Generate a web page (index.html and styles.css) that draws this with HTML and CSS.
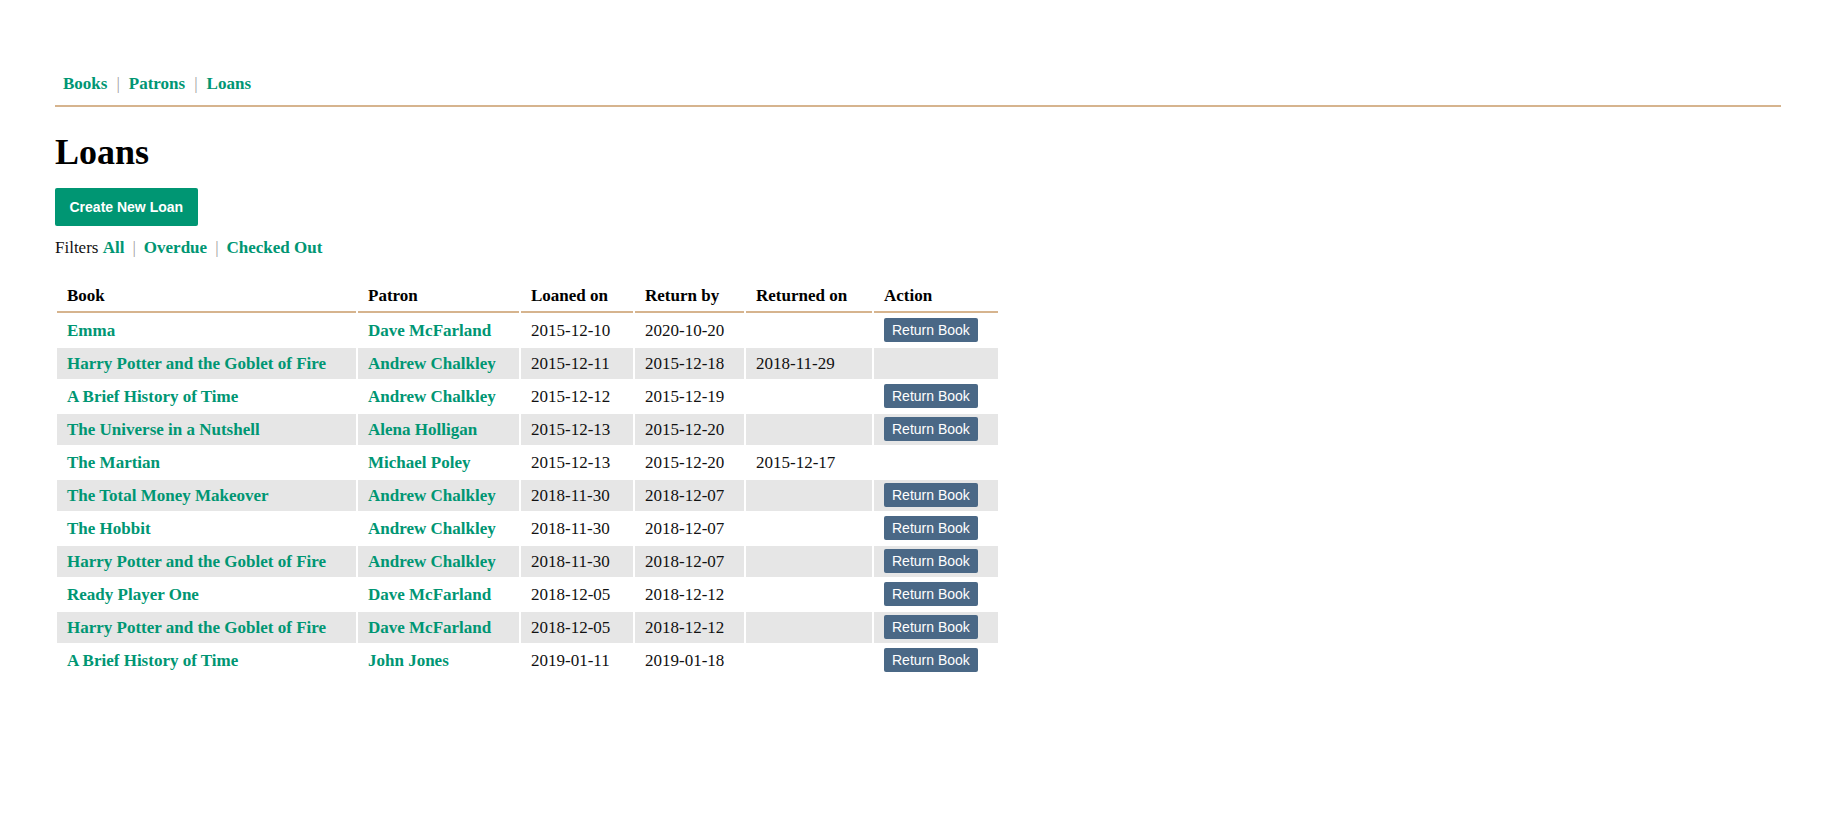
FILE: index.html
```html
<!DOCTYPE html>
<html lang="en">
<head>
<meta charset="utf-8">
<title>Loans</title>
<link rel="stylesheet" href="styles.css">
</head>
<body>
<div class="page">
  <nav class="nav">
    <a href="#">Books</a><span class="sep">|</span><a href="#">Patrons</a><span class="sep">|</span><a href="#">Loans</a>
  </nav>
  <h1 class="title">Loans</h1>
  <a class="btn-primary" href="#">Create New Loan</a>
  <p class="filters">Filters <a href="#">All</a><span class="sep">|</span><a href="#">Overdue</a><span class="sep">|</span><a href="#">Checked Out</a></p>
  <table class="loans">
    <thead>
      <tr>
        <th class="c-book">Book</th>
        <th class="c-patron">Patron</th>
        <th class="c-loaned">Loaned on</th>
        <th class="c-return">Return by</th>
        <th class="c-returned">Returned on</th>
        <th class="c-action">Action</th>
      </tr>
    </thead>
    <tbody>
      <tr><td><a href="#">Emma</a></td><td><a href="#">Dave McFarland</a></td><td>2015-12-10</td><td>2020-10-20</td><td></td><td><a class="btn-return" href="#">Return Book</a></td></tr>
      <tr><td><a href="#">Harry Potter and the Goblet of Fire</a></td><td><a href="#">Andrew Chalkley</a></td><td>2015-12-11</td><td>2015-12-18</td><td>2018-11-29</td><td></td></tr>
      <tr><td><a href="#">A Brief History of Time</a></td><td><a href="#">Andrew Chalkley</a></td><td>2015-12-12</td><td>2015-12-19</td><td></td><td><a class="btn-return" href="#">Return Book</a></td></tr>
      <tr><td><a href="#">The Universe in a Nutshell</a></td><td><a href="#">Alena Holligan</a></td><td>2015-12-13</td><td>2015-12-20</td><td></td><td><a class="btn-return" href="#">Return Book</a></td></tr>
      <tr><td><a href="#">The Martian</a></td><td><a href="#">Michael Poley</a></td><td>2015-12-13</td><td>2015-12-20</td><td>2015-12-17</td><td></td></tr>
      <tr><td><a href="#">The Total Money Makeover</a></td><td><a href="#">Andrew Chalkley</a></td><td>2018-11-30</td><td>2018-12-07</td><td></td><td><a class="btn-return" href="#">Return Book</a></td></tr>
      <tr><td><a href="#">The Hobbit</a></td><td><a href="#">Andrew Chalkley</a></td><td>2018-11-30</td><td>2018-12-07</td><td></td><td><a class="btn-return" href="#">Return Book</a></td></tr>
      <tr><td><a href="#">Harry Potter and the Goblet of Fire</a></td><td><a href="#">Andrew Chalkley</a></td><td>2018-11-30</td><td>2018-12-07</td><td></td><td><a class="btn-return" href="#">Return Book</a></td></tr>
      <tr><td><a href="#">Ready Player One</a></td><td><a href="#">Dave McFarland</a></td><td>2018-12-05</td><td>2018-12-12</td><td></td><td><a class="btn-return" href="#">Return Book</a></td></tr>
      <tr><td><a href="#">Harry Potter and the Goblet of Fire</a></td><td><a href="#">Dave McFarland</a></td><td>2018-12-05</td><td>2018-12-12</td><td></td><td><a class="btn-return" href="#">Return Book</a></td></tr>
      <tr><td><a href="#">A Brief History of Time</a></td><td><a href="#">John Jones</a></td><td>2019-01-11</td><td>2019-01-18</td><td></td><td><a class="btn-return" href="#">Return Book</a></td></tr>
    </tbody>
  </table>
</div>
</body>
</html>
```
FILE: styles.css
```css
* { box-sizing: border-box; }

body {
  margin: 0;
  background: #fff;
  color: #111;
  font-family: "Liberation Serif", "Times New Roman", serif;
  font-size: 17px;
}

a {
  color: #009673;
  font-weight: bold;
  text-decoration: none;
}

.page {
  padding: 0 45px 40px 55px;
}

.nav {
  padding: 74px 0 11px 8px;
  line-height: 20px;
  border-bottom: 2px solid #d6b48e;
}

.sep {
  color: #a0a0a0;
  margin: 0 9px;
}

.title {
  margin: 24px 0 0;
  font-size: 36px;
  line-height: 42px;
  font-weight: bold;
  color: #000;
}

.btn-primary {
  display: inline-block;
  margin-top: 15px;
  padding: 11px 14.5px;
  background: #009673;
  color: #fff;
  font-family: "Liberation Sans", Arial, sans-serif;
  font-size: 14px;
  line-height: 16px;
  border-radius: 2px;
  white-space: nowrap;
}

.filters {
  margin: 12px 0 0;
  line-height: 20px;
}

.filters .sep {
  margin: 0 8px;
}

.loans {
  margin-top: 20px;
  border-spacing: 2px;
  text-align: left;
}

.loans th,
.loans td {
  padding: 3px 16px 3px 10px;
  line-height: 25px;
  white-space: nowrap;
}

.loans th {
  color: #000;
  font-weight: bold;
  border-bottom: 2px solid #d6b48e;
}

.loans td {
  color: #111;
}

.loans tbody tr:nth-child(even) td {
  background: #e6e6e6;
}

.c-book { width: 299px; }
.c-patron { width: 161px; }
.c-loaned { width: 112px; }
.c-return { width: 109px; }
.c-returned { width: 126px; }
.c-action { width: 124px; }

.btn-return {
  display: inline-block;
  vertical-align: 1px;
  padding: 4px 8px;
  background: #4a6886;
  color: #fff;
  font-family: "Liberation Sans", Arial, sans-serif;
  font-size: 14px;
  font-weight: normal;
  line-height: 16px;
  border-radius: 2px;
  white-space: nowrap;
}
```
